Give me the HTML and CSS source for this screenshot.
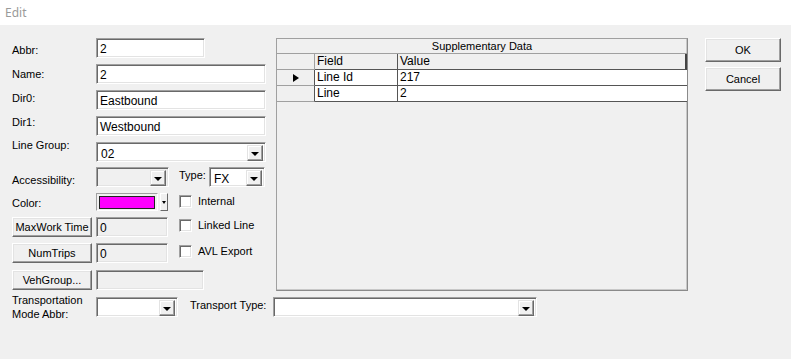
FILE: index.html
```html
<!DOCTYPE html>
<html>
<head>
<meta charset="utf-8">
<link rel="stylesheet" href="styles.css">
</head>
<body>
<div class="titlebar">Edit</div>
<div class="dialog">
  <div class="main">
    <div class="form">
      <div class="lbl l-abbr">Abbr:</div>
      <div class="ctl"><div class="field w109">2</div></div>

      <div class="lbl l-name">Name:</div>
      <div class="ctl"><div class="field w170">2</div></div>

      <div class="lbl l-dir0">Dir0:</div>
      <div class="ctl"><div class="field w170">Eastbound</div></div>

      <div class="lbl l-dir1">Dir1:</div>
      <div class="ctl"><div class="field w170">Westbound</div></div>

      <div class="lbl l-group">Line Group:</div>
      <div class="ctl"><div class="combo w170"><span class="val">02</span><span class="drop"><i class="tri"></i></span></div></div>

      <div class="lbl l-acc">Accessibility:</div>
      <div class="ctl">
        <div class="combo w73 disabled"><span class="val"></span><span class="drop"><i class="tri"></i></span></div>
        <div class="lbl type-lbl">Type:</div>
        <div class="combo w56"><span class="val">FX</span><span class="drop"><i class="tri"></i></span></div>
      </div>

      <div class="lbl l-color">Color:</div>
      <div class="ctl">
        <div class="colorbox"><div class="swatch"></div></div>
        <div class="colordrop"><i class="tri small"></i></div>
        <div class="check"><span class="box"></span>Internal</div>
      </div>

      <div class="btncell"><div class="btn small">MaxWork Time</div></div>
      <div class="ctl">
        <div class="field w72 disabled">0</div>
        <div class="check"><span class="box"></span>Linked Line</div>
      </div>

      <div class="btncell"><div class="btn small">NumTrips</div></div>
      <div class="ctl">
        <div class="field w72 disabled">0</div>
        <div class="check"><span class="box"></span>AVL Export</div>
      </div>

      <div class="btncell"><div class="btn small">VehGroup...</div></div>
      <div class="ctl"><div class="field w108 disabled"></div></div>
    </div>

    <div class="grid">
      <div class="g-title">Supplementary Data</div>
      <div class="g-row g-head">
        <div class="g-ind"></div>
        <div class="g-field">Field</div>
        <div class="g-value">Value</div>
      </div>
      <div class="g-row g-data">
        <div class="g-ind"><i class="cur"></i></div>
        <div class="g-field">Line Id</div>
        <div class="g-value">217</div>
      </div>
      <div class="g-row g-data">
        <div class="g-ind"></div>
        <div class="g-field">Line</div>
        <div class="g-value">2</div>
      </div>
    </div>

    <div class="buttons">
      <div class="btn big">OK</div>
      <div class="btn big">Cancel</div>
    </div>
  </div>

  <div class="bottom">
    <div class="lbl two">Transportation<br>Mode Abbr:</div>
    <div class="combo w82"><span class="val"></span><span class="drop"><i class="tri"></i></span></div>
    <div class="lbl tt-lbl">Transport Type:</div>
    <div class="combo w264"><span class="val"></span><span class="drop"><i class="tri"></i></span></div>
  </div>
</div>
</body>
</html>
```

FILE: styles.css
```css
* { box-sizing: border-box; }
html, body {
  margin: 0;
  padding: 0;
}
body {
  width: 791px;
  height: 359px;
  background: #f0f0f0;
  font-family: "Liberation Sans", Arial, sans-serif;
  font-size: 11px;
  color: #000;
  overflow: hidden;
}
.titlebar {
  height: 25px;
  background: #fff;
  color: #9a9a9a;
  font-family: "Noto Sans", "Open Sans", sans-serif;
  font-size: 12px;
  line-height: 26px;
  padding-left: 5px;
}
.dialog {
  padding: 13px 0 0 12px;
}
.main {
  display: flex;
  align-items: flex-start;
}
.form {
  width: 254px;
  display: grid;
  grid-template-columns: 84px 170px;
  grid-template-rows: 26px 26px 26px 26px 25px 26px 24px 26px 27px 20px;
}
.lbl {
  line-height: 13px;
  white-space: nowrap;
}
.l-abbr { padding-top: 6px; }
.l-name { padding-top: 4px; }
.l-dir0 { padding-top: 2px; }
.l-dir1 { padding-top: 0; }
.l-group { margin-top: -3px; }
.l-acc { padding-top: 7px; }
.l-color { padding-top: 4px; }
.ctl {
  display: flex;
  align-items: flex-start;
}
.field {
  height: 20px;
  background: #fff;
  border: 1px solid;
  border-color: #a0a0a0 #fff #fff #a0a0a0;
  box-shadow: inset 1px 1px 0 #696969, inset -1px -1px 0 #e3e3e3;
  padding: 3px 0 0 3px;
  font-size: 12px;
  line-height: 14px;
  white-space: nowrap;
  overflow: hidden;
}
.field.disabled, .combo.disabled { background: #f0f0f0; }
.w109 { width: 109px; }
.w170 { width: 170px; }
.w108 { width: 108px; }
.w72 { width: 72px; }
.w73 { width: 73px; }
.w56 { width: 56px; }
.w82 { width: 82px; }
.w264 { width: 264px; }

.combo {
  height: 20px;
  background: #fff;
  border: 1px solid;
  border-color: #a0a0a0 #fff #fff #a0a0a0;
  box-shadow: inset 1px 1px 0 #696969, inset -1px -1px 0 #e3e3e3;
  display: flex;
  padding: 2px;
}
.combo .val {
  flex: 1;
  padding: 2px 0 0 2px;
  font-size: 12px;
  line-height: 14px;
}
.drop {
  width: 16px;
  height: 16px;
  background: #f0f0f0;
  border: 1px solid;
  border-color: #e3e3e3 #696969 #696969 #e3e3e3;
  box-shadow: inset -1px -1px 0 #a0a0a0, inset 1px 1px 0 #fff;
  display: flex;
  align-items: center;
  justify-content: center;
}
.tri {
  display: block;
  width: 0;
  height: 0;
  border-left: 4px solid transparent;
  border-right: 4px solid transparent;
  border-top: 4px solid #000;
  margin-top: 1px;
}
.tri.small {
  border-left-width: 2px;
  border-right-width: 2px;
  border-top-width: 3px;
}
.type-lbl { margin-left: 10px; width: 30px; padding-top: 2px; }
.tt-lbl { margin-left: 12px; width: 83px; padding-top: 2px; }

.colorbox {
  width: 62px;
  height: 18px;
  border: 1px solid;
  border-color: #a0a0a0 #fff #fff #a0a0a0;
  padding: 2px 2px 1px 2px;
}
.swatch {
  height: 100%;
  background: #ff00ff;
  border: 1px solid #222;
}
.colordrop {
  width: 8px;
  height: 18px;
  margin-left: 2px;
  border: 1px solid;
  border-color: #fff #696969 #696969 #fff;
  display: flex;
  align-items: center;
  justify-content: center;
}
.check {
  display: flex;
  align-items: center;
  margin-left: 11px;
  margin-top: 2px;
  line-height: 13px;
  white-space: nowrap;
}
.check .box {
  width: 13px;
  height: 13px;
  background: #fff;
  border: 1px solid;
  border-color: #a0a0a0 #fff #fff #a0a0a0;
  box-shadow: inset 1px 1px 0 #696969, inset -1px -1px 0 #e3e3e3;
  margin-right: 6px;
}
.btncell { display: flex; align-items: flex-start; }
.btn {
  background: #f0f0f0;
  border: 1px solid;
  border-color: #fff #696969 #696969 #fff;
  box-shadow: inset -1px -1px 0 #a0a0a0, inset 1px 1px 0 #e3e3e3;
  text-align: center;
  white-space: nowrap;
}
.btn.small {
  width: 80px;
  height: 20px;
  line-height: 18px;
}
.btn.big {
  width: 76px;
  height: 24px;
  line-height: 22px;
}
.buttons {
  margin-left: 17px;
  display: flex;
  flex-direction: column;
  gap: 5px;
}

.grid {
  margin-left: 10px;
  width: 412px;
  height: 253px;
  border: 1px solid #8a8a8a;
  border-top-color: #a0a0a0;
  border-left-color: #a0a0a0;
  box-shadow: inset -1px -1px 0 #c8c8c8;
}
.g-title {
  height: 15px;
  line-height: 14px;
  text-align: center;
  border-bottom: 1px solid #a0a0a0;
}
.g-row {
  display: flex;
  height: 16px;
  font-size: 12px;
}
.g-ind {
  width: 38px;
  border-right: 1px solid #555;
  border-bottom: 1px solid #a0a0a0;
  display: flex;
  align-items: center;
  justify-content: center;
}
.g-field {
  width: 83px;
  border-right: 1px solid #555;
  border-bottom: 1px solid #555;
  padding-left: 2px;
  line-height: 15px;
}
.g-value {
  flex: 1;
  border-bottom: 1px solid #555;
  padding-left: 2px;
  line-height: 15px;
}
.g-head .g-value { border-right: 2px solid #444; }
.g-head .g-ind { border-right-color: #a0a0a0; }
.g-data .g-field, .g-data .g-value { background: #fff; }
.g-data .g-field, .g-data .g-value { line-height: 15px; }
.cur {
  display: block;
  width: 0;
  height: 0;
  border-top: 4px solid transparent;
  border-bottom: 4px solid transparent;
  border-left: 6px solid #000;
}

.bottom {
  margin-top: 6px;
  display: flex;
  align-items: flex-start;
}
.lbl.two {
  width: 84px;
  margin-top: -4px;
  line-height: 14px;
}
```
